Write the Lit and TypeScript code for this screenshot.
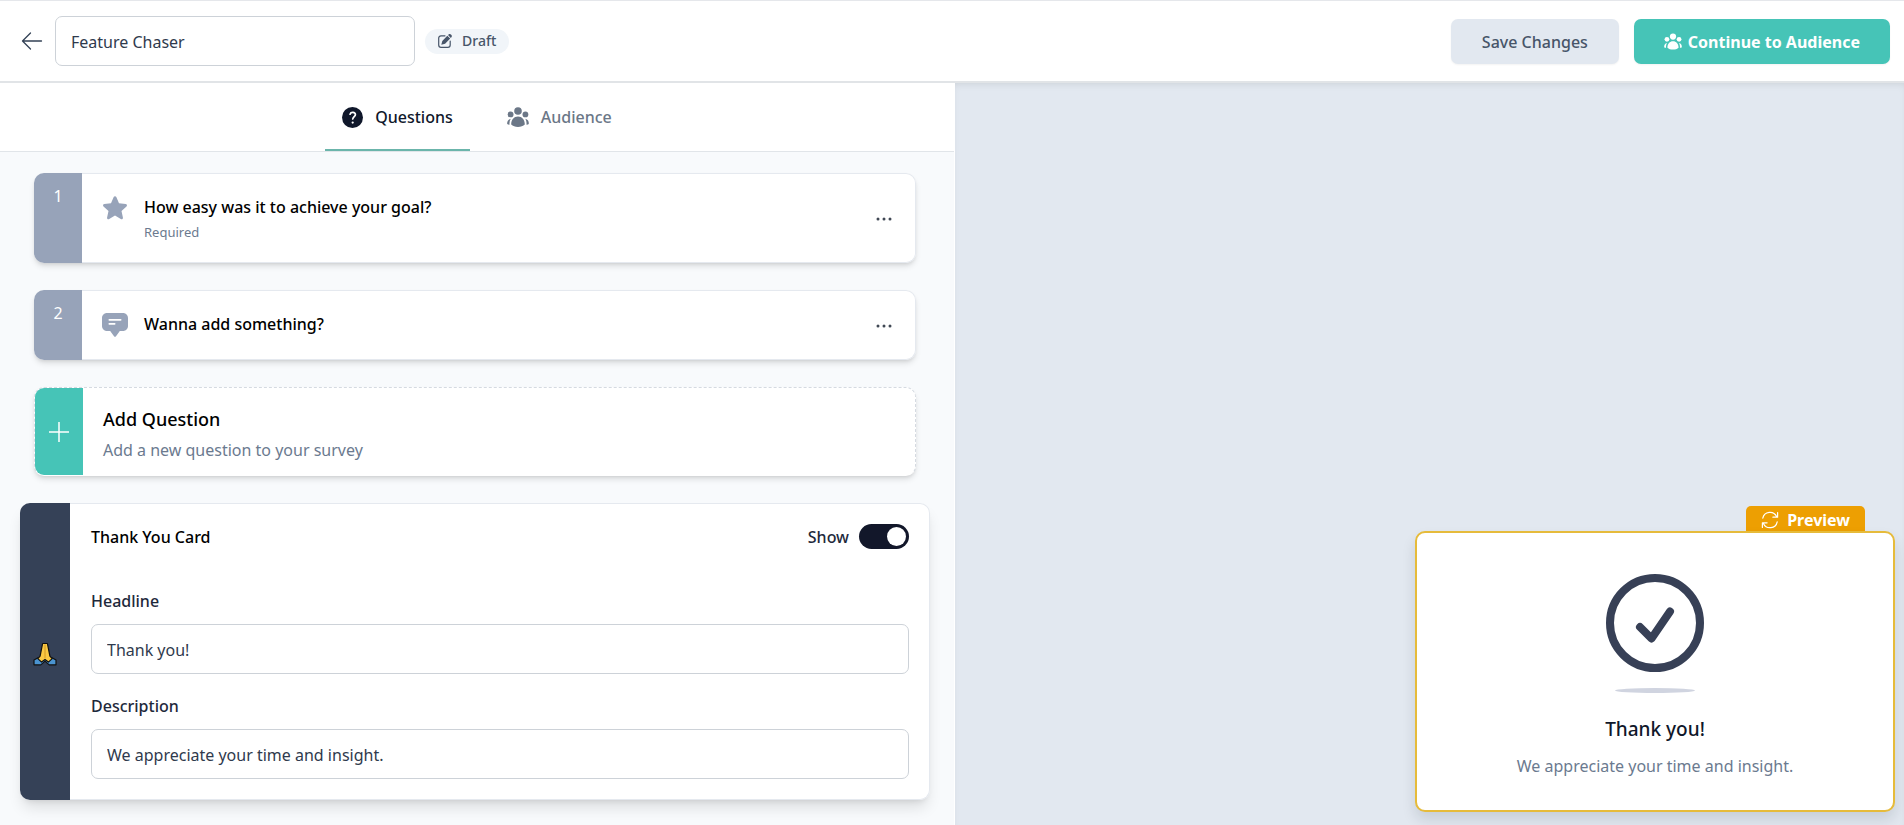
import { LitElement, html, css, svg } from "lit";
import { customElement, property, state } from "lit/decorators.js";
import { classMap } from "lit/directives/class-map.js";

const people = svg`
  <circle cx="11" cy="4" r="3.8"></circle>
  <circle cx="3.6" cy="7.4" r="2.9"></circle>
  <circle cx="18.4" cy="7.4" r="2.9"></circle>
  <path d="M4.2 17.6C4.2 12.6 7 9.6 11 9.6s6.8 3 6.8 8c-1.600 1.500-4 2.300-6.800 2.300s-5.200-.8-6.800-2.300z"></path>
  <path d="M3.700 11.800C2.700 13.500 2.300 15.500 2.500 17.700C1.600 17.800.8 17.400.2 16.900C0 14.400 1.200 12.300 3.700 11.800z"></path>
  <path d="M18.300 11.800c1 1.700 1.400 3.700 1.200 5.900c.9.1 1.700-.3 2.300-.8c.2-2.500-1-4.600-3.500-5.100z"></path>`;

const star = svg`<path d="M10.700 1.100c.5-1.200 2.100-1.200 2.600 0l2.700 6.200 6.700.7c1.300.1 1.700 1.600.8 2.400l-5 4.500 1.400 6.700c.3 1.200-1 2.200-2.100 1.500L12 19.600l-5.800 3.500c-1.100.7-2.400-.3-2.100-1.500l1.400-6.700-5-4.500c-.9-.8-.5-2.300.8-2.400l6.700-.7z"></path>`;

const comment = svg`
  <path fill-rule="evenodd" d="M5 0h16c2.800 0 5 2.200 5 5v8c0 2.800-2.200 5-5 5h-3.200L14 23.200c-.5.7-1.500.7-2 0L8.200 18H5c-2.800 0-5-2.200-5-5V5c0-2.800 2.200-5 5-5zM7.300 6.100c-1.100 0-1.100 1.700 0 1.700h11.400c1.100 0 1.100-1.700 0-1.700zM7.300 10.100c-1.100 0-1.100 1.700 0 1.700h5.400c1.100 0 1.100-1.700 0-1.700z"></path>`;

interface Question {
  kind: "rating" | "text";
  title: string;
  required: boolean;
}

@customElement("question-card")
export class QuestionCard extends LitElement {
  @property({ type: Number }) number = 1;
  @property({ attribute: false }) question!: Question;

  static styles = css`
    :host { display: block; }
    .card {
      display: flex;
      border-radius: 10px;
      background: #fff;
      box-shadow: 0 4px 6px -1px rgba(0, 0, 0, 0.12), 0 2px 4px -2px rgba(0, 0, 0, 0.12);
      min-height: 70px;
    }
    .strip {
      flex: 0 0 48px;
      background: #97a3b9;
      border-radius: 10px 0 0 10px;
      color: #fff;
      text-align: center;
      font-size: 16px;
      line-height: 20px;
      padding-top: 13px;
      box-sizing: border-box;
    }
    .content {
      flex: 1;
      display: flex;
      align-items: flex-start;
      border: 1px solid #e5e9ef;
      border-left: 0;
      border-radius: 0 10px 10px 0;
      padding: 20px 18px 18px 20px;
    }
    .icon { width: 26px; height: 24px; margin-top: 2px; fill: #97a3b9; }
    .texts { flex: 1; margin-left: 16px; }
    .title { margin: 0; font-size: 16px; line-height: 26px; font-weight: 500; color: #000; }
    .required { margin: 0; font-size: 13px; line-height: 24px; color: #6b7a8f; }
    .more {
      align-self: center;
      display: flex;
      padding: 4px;
      border: 0;
      background: none;
      cursor: pointer;
    }
    .dots { width: 18px; height: 4px; fill: #404854; }
  `;

  render() {
    const q = this.question;
    return html`
      <article class="card">
        <div class="strip">${this.number}</div>
        <div class="content">
          ${q.kind === "rating"
            ? html`<svg class="icon" viewBox="0 0 24 24" aria-hidden="true">${star}</svg>`
            : html`<svg class="icon" viewBox="0 0 26 24" aria-hidden="true">${comment}</svg>`}
          <div class="texts">
            <h3 class="title">${q.title}</h3>
            ${q.required ? html`<p class="required">Required</p>` : null}
          </div>
          <button class="more" aria-label="Question options">
            <svg class="dots" viewBox="0 0 18 4"><circle cx="3" cy="2" r="1.500"></circle><circle cx="9" cy="2" r="1.500"></circle><circle cx="15" cy="2" r="1.500"></circle></svg>
          </button>
        </div>
      </article>
    `;
  }
}

@customElement("app-root")
export class AppRoot extends LitElement {
  @state() private name = "Feature Chaser";
  @state() private headline = "Thank you!";
  @state() private description = "We appreciate your time and insight.";
  @state() private show = true;
  @state() private tab = "questions";

  private questions: Question[] = [
    { kind: "rating", title: "How easy was it to achieve your goal?", required: true },
    { kind: "text", title: "Wanna add something?", required: false },
  ];

  static styles = css`
    :host {
      display: flex;
      flex-direction: column;
      min-height: 100vh;
      font-family: "Noto Sans", "Open Sans", sans-serif;
      font-size: 16px;
      line-height: 24px;
      color: #1e293b;
      background: #fff;
    }
    button, input { font: inherit; color: inherit; }
    button { cursor: pointer; }
    .header {
      display: flex;
      align-items: center;
      height: 80px;
      padding: 0 14px 0 20px;
      border-top: 1px solid #e5e7eb;
      border-bottom: 2px solid #e1e4e7;
    }
    .back { display: flex; padding: 0; border: 0; background: none; margin-right: 11px; }
    .back-icon { width: 24px; height: 24px; fill: none; stroke: #334155; stroke-width: 1.300; stroke-linecap: round; stroke-linejoin: round; }
    .input {
      display: block;
      width: 100%;
      height: 50px;
      box-sizing: border-box;
      padding: 2px 15px 0;
      border: 1px solid #cdd2d8;
      border-radius: 7px;
      background: #fff;
      color: #2f3a4d;
      outline-color: #46c4b7;
    }
    .name { width: 360px; margin-right: 10px; }
    .badge {
      display: flex;
      align-items: center;
      gap: 10px;
      height: 25px;
      padding: 0 13px;
      border-radius: 13px;
      background: #f1f5f9;
      color: #475569;
      font-size: 14px;
      font-weight: 500;
    }
    .badge-icon { width: 14px; height: 14px; fill: #475569; }
    .actions { display: flex; gap: 15px; margin-left: auto; }
    .button {
      display: flex;
      align-items: center;
      height: 45px;
      padding: 2px 31px 0;
      border: 0;
      border-radius: 7px;
      font-weight: 500;
      background: #e2e8f0;
      color: #475569;
      box-shadow: 0 1px 2px rgba(0, 0, 0, 0.05);
    }
    .primary { gap: 6px; background: #46c4b7; color: #fff; font-weight: 700; padding: 2px 30px 0; }
    .button-icon { width: 18px; height: 17px; fill: #fff; margin-bottom: 2px; }
    .main { flex: 1; display: grid; grid-template-columns: 955fr 949fr; }
    .editor { background: #f8fafc; border-right: 1px solid #fff; min-width: 0; }
    .tabs {
      display: flex;
      justify-content: center;
      gap: 20px;
      height: 68px;
      background: #fff;
      border-bottom: 1px solid #e1e5e9;
    }
    .tab {
      display: flex;
      align-items: center;
      gap: 12px;
      padding: 2px 17px 0;
      border: 0;
      border-bottom: 2px solid transparent;
      background: none;
      color: #6b7787;
      font-weight: 500;
    }
    .active { color: #0f172a; border-bottom-color: #6bb5ab; }
    .tab-icon { width: 22px; height: 20px; fill: currentColor; }
    .round { height: 21px; width: 21px; }
    .mark { fill: none; stroke: #fff; stroke-width: 2; stroke-linecap: round; }
    .dot { fill: #fff; }
    .cards { display: flex; flex-direction: column; gap: 27px; padding: 21px 24px 24px 20px; }
    .question, .add { margin: 0 14px; }
    .add {
      display: flex;
      padding: 0;
      border: 1px dashed #d5dae1;
      border-bottom-color: transparent;
      border-radius: 10px;
      background: #fff;
      text-align: left;
      min-height: 89px;
      box-sizing: border-box;
      box-shadow: 0 4px 6px -1px rgba(0, 0, 0, 0.12), 0 2px 4px -2px rgba(0, 0, 0, 0.12);
    }
    .add-strip {
      flex: 0 0 48px;
      align-self: stretch;
      display: flex;
      align-items: center;
      justify-content: center;
      border-radius: 9px 0 0 9px;
      background: #46c4b7;
    }
    .plus { width: 20px; height: 20px; stroke: #fff; stroke-width: 1.500; }
    .add-texts { display: flex; flex-direction: column; gap: 6px; padding: 18px 20px 12px; }
    .add-title { color: #000; font-size: 18px; line-height: 26px; font-weight: 500; }
    .add-sub { color: #6b7a8f; line-height: 25px; }
    .thanks {
      display: flex;
      border-radius: 10px;
      background: #fff;
      box-shadow: 0 10px 15px -3px rgba(0, 0, 0, 0.12), 0 4px 6px -4px rgba(0, 0, 0, 0.12);
    }
    .thanks-strip {
      flex: 0 0 50px;
      display: flex;
      align-items: center;
      justify-content: center;
      border-radius: 10px 0 0 10px;
      background: #354157;
    }
    .hands { width: 24px; height: 24px; margin-top: 4px; }
    .form {
      flex: 1;
      border: 1px solid #e5e9ef;
      border-left: 0;
      border-radius: 0 10px 10px 0;
      padding: 20px 20px 20px 21px;
    }
    .form-head { display: flex; align-items: center; height: 25px; margin-bottom: 39px; }
    .form-title { margin: 0 auto 0 0; color: #000; font-size: 16px; font-weight: 500; }
    .switch-label { display: flex; align-items: center; gap: 10px; font-weight: 500; }
    .switch {
      appearance: none;
      width: 50px;
      height: 25px;
      margin: 0;
      padding: 3px;
      display: flex;
      box-sizing: border-box;
      border-radius: 13px;
      background: #cbd5e1;
      cursor: pointer;
    }
    .switch::before { content: ""; width: 19px; height: 19px; border-radius: 50%; background: #fff; }
    .switch:checked { background: #12172a; justify-content: flex-end; }
    .label { display: block; font-weight: 500; line-height: 26px; margin-bottom: 10px; }
    .field { margin-bottom: 19px; }
    .field:last-child { margin-bottom: 0; }
    .stage {
      display: flex;
      flex-direction: column;
      justify-content: flex-end;
      align-items: flex-end;
      padding: 0 9px 13px;
      background: #e2e8f0;
      box-shadow: inset 0 4px 8px -4px rgba(0, 0, 0, 0.12);
    }
    .preview-tab {
      display: flex;
      align-items: center;
      gap: 8px;
      height: 25px;
      padding: 2px 15px 0;
      margin-right: 30px;
      border: 0;
      border-radius: 5px 5px 0 0;
      background: #ed9f02;
      color: #fff;
      font-weight: 700;
    }
    .refresh { width: 18px; height: 18px; fill: none; stroke: #fff; stroke-width: 1.200; stroke-linecap: round; stroke-linejoin: round; }
    .preview {
      display: flex;
      flex-direction: column;
      align-items: center;
      width: 480px;
      max-width: 100%;
      box-sizing: border-box;
      padding: 40px 20px 31px;
      border: 2px solid #e6bb3b;
      border-radius: 10px;
      background: #fff;
      box-shadow: 0 8px 14px rgba(15, 23, 42, 0.12);
      text-align: center;
    }
    .check { width: 100px; height: 120px; fill: none; stroke: #374056; stroke-linecap: round; stroke-linejoin: round; }
    .check-shadow { fill: #d0d4e0; stroke: none; }
    .preview-title { margin: 22px 0 0; font-size: 19px; line-height: 28px; font-weight: 500; color: #0f172a; }
    .preview-text { margin: 10px 0 0; line-height: 26px; color: #6b7a8f; }
  `;

  render() {
    return html`
      <header class="header">
        <button class="back" aria-label="Back">
          <svg class="back-icon" viewBox="0 0 24 24"><path d="M21.500 12H2.500M10.500 4L2.500 12l8 8"></path></svg>
        </button>
        <input class="input name" aria-label="Survey name" .value=${this.name}
          @input=${(e: Event) => (this.name = (e.target as HTMLInputElement).value)} />
        <span class="badge">
          <svg class="badge-icon" viewBox="0 0 14 14" aria-hidden="true">
            <path d="M7 1.800H3A2.300 2.300 0 0 0 .7 4.100v6.900A2.300 2.300 0 0 0 3 13.300h6.900a2.300 2.300 0 0 0 2.300-2.300V7" fill="none" stroke="#475569" stroke-width="1.200" stroke-linecap="round"></path>
            <path d="M3.300 10.800l1-3.900 5-5.200 2.900 2.900-5.100 5.200zM10 1l.9-.7c1.400-1 3.700 1 2.700 2.700l-.8.900z"></path>
          </svg>
          Draft
        </span>
        <div class="actions">
          <button class="button">Save Changes</button>
          <button class="button primary">
            <svg class="button-icon" viewBox="0 0 22 20" aria-hidden="true">${people}</svg>
            Continue to Audience
          </button>
        </div>
      </header>
      <main class="main">
        <section class="editor">
          <nav class="tabs">
            <button class=${classMap({ tab: true, active: this.tab === "questions" })} @click=${() => (this.tab = "questions")}>
              <svg class="tab-icon round" viewBox="0 0 24 24" aria-hidden="true">
                <circle cx="12" cy="12" r="12"></circle>
                <path class="mark" d="M9.200 8.200C9.800 6.500 11.200 6 12.500 6.100C14.300 6.200 15.400 7.400 15.300 8.900C15.200 10.900 12.500 11.200 12.300 13.700"></path>
                <circle class="dot" cx="12.200" cy="17.800" r="1.300"></circle>
              </svg>
              Questions
            </button>
            <button class=${classMap({ tab: true, active: this.tab === "audience" })} @click=${() => (this.tab = "audience")}>
              <svg class="tab-icon" viewBox="0 0 22 20" aria-hidden="true">${people}</svg>
              Audience
            </button>
          </nav>
          <div class="cards">
            ${this.questions.map(
              (q, i) => html`<question-card class="question" .number=${i + 1} .question=${q}></question-card>`
            )}
            <button class="add">
              <span class="add-strip">
                <svg class="plus" viewBox="0 0 20 20" aria-hidden="true"><path d="M10 0v20M0 10h20"></path></svg>
              </span>
              <span class="add-texts">
                <span class="add-title">Add Question</span>
                <span class="add-sub">Add a new question to your survey</span>
              </span>
            </button>
            <section class="thanks">
              <div class="thanks-strip">
                <svg class="hands" viewBox="0 0 24 24" role="img" aria-label="Folded hands" stroke="#111" stroke-width="1.200" stroke-linejoin="round">
                  <path fill="#4a93d0" d="M5.500 15.500L1 18v4.800l6.800.1 4.200-3.800 4.200 3.800 6.800-.1V18l-4.500-2.500z"></path>
                  <path fill="#fbc943" d="M9.600 1.500h4.800l2.500 12.700 2.300 2.400-3.800 3.500L12 17.500 8.600 20.100l-3.800-3.500 2.300-2.400z"></path>
                  <path fill="none" stroke="#c98d1c" stroke-width=".8" d="M12 2.500v14"></path>
                </svg>
              </div>
              <div class="form">
                <div class="form-head">
                  <h3 class="form-title">Thank You Card</h3>
                  <label class="switch-label">
                    Show
                    <input class="switch" type="checkbox" role="switch" .checked=${this.show}
                      @change=${(e: Event) => (this.show = (e.target as HTMLInputElement).checked)} />
                  </label>
                </div>
                <div class="field">
                  <label class="label" for="headline">Headline</label>
                  <input class="input" id="headline" .value=${this.headline}
                    @input=${(e: Event) => (this.headline = (e.target as HTMLInputElement).value)} />
                </div>
                <div class="field">
                  <label class="label" for="description">Description</label>
                  <input class="input" id="description" .value=${this.description}
                    @input=${(e: Event) => (this.description = (e.target as HTMLInputElement).value)} />
                </div>
              </div>
            </section>
          </div>
        </section>
        <aside class="stage">
          <button class="preview-tab">
            <svg class="refresh" viewBox="0 0 18 18" aria-hidden="true">
              <path d="M1.800 7.200A7.300 7.300 0 0 1 15.600 5.600M16.600 1.500v4.700h-4.700M16.200 10.800A7.300 7.300 0 0 1 2.400 12.400M1.400 16.500v-4.700h4.700"></path>
            </svg>
            Preview
          </button>
          <div class="preview">
            <svg class="check" viewBox="0 0 100 120" aria-hidden="true">
              <circle cx="50" cy="50" r="45" stroke-width="8"></circle>
              <path d="M35 54L46.500 65.500 65 38.500" stroke-width="8"></path>
              <ellipse class="check-shadow" cx="50" cy="117.500" rx="40" ry="2.500"></ellipse>
            </svg>
            <h2 class="preview-title">${this.headline}</h2>
            <p class="preview-text">${this.description}</p>
          </div>
        </aside>
      </main>
    `;
  }
}
